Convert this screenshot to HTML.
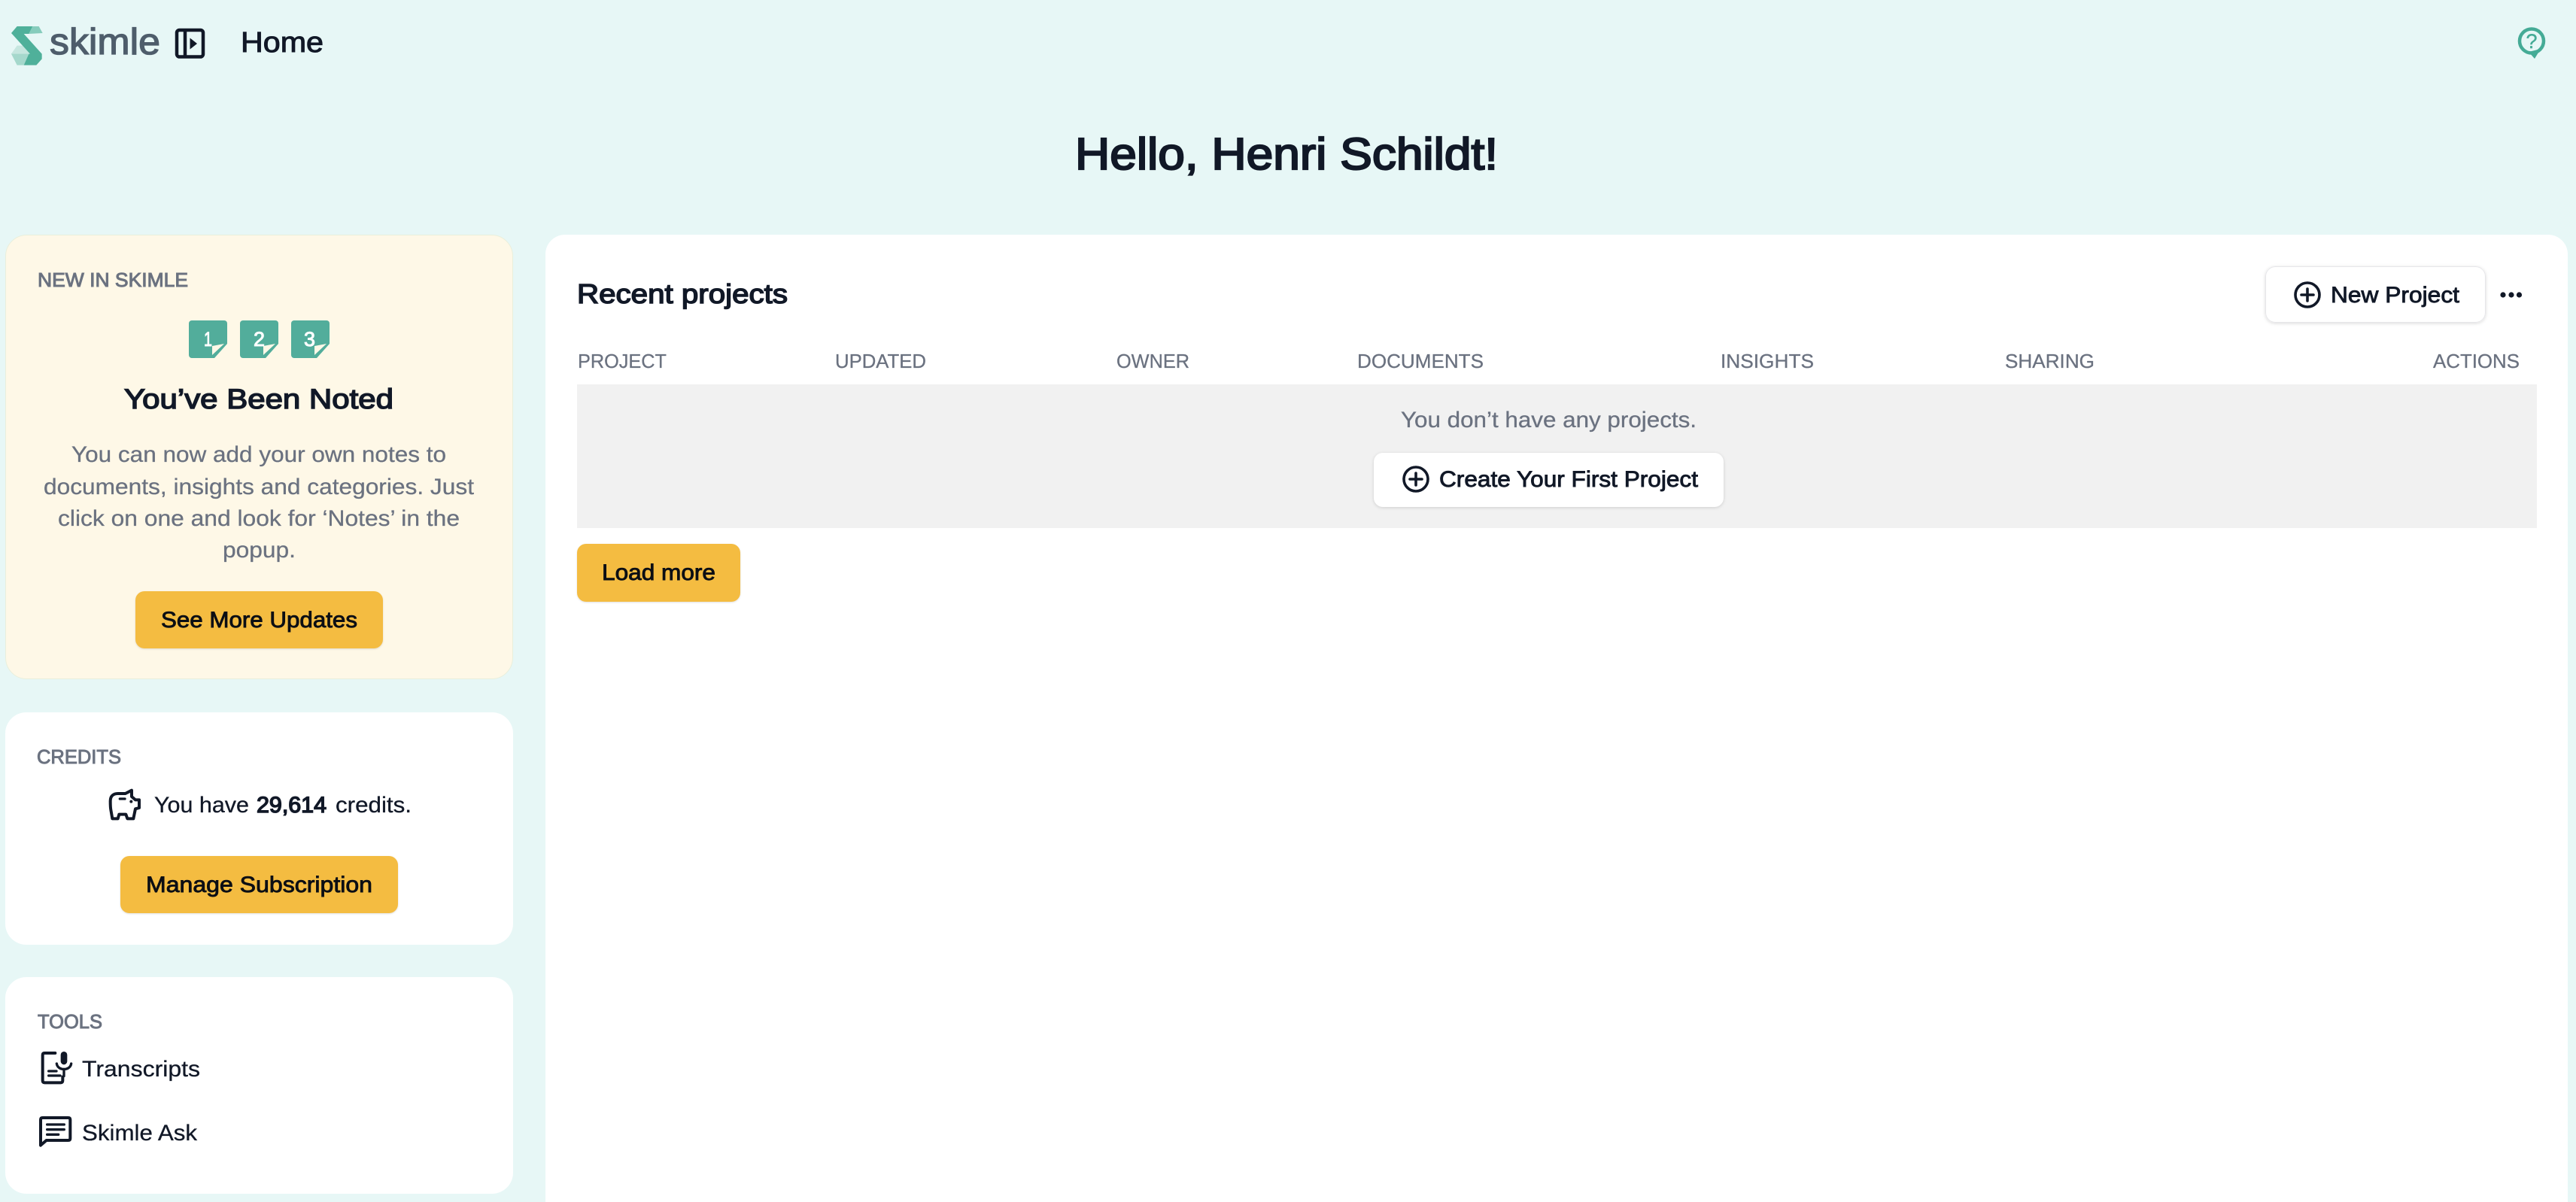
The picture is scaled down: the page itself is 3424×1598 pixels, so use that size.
<!DOCTYPE html>
<html lang="en">
<head>
<meta charset="utf-8">
<title>Skimle - Home</title>
<style>
html,body{margin:0;padding:0;width:3424px;height:1598px;overflow:hidden;background:#e7f7f6}
svg{display:block}
text{font-family:"Liberation Sans",sans-serif;white-space:pre}
.d{fill:#111827;stroke:#111827}
.g{fill:#6b7280;stroke:#6b7280}
.b{fill:#0c0f14;stroke:#0c0f14}
.m{stroke-width:.9}
.s{stroke-width:1.5}
.l{stroke-width:1}
.r{stroke-width:.3}
.btn{fill:#f4bc41;filter:drop-shadow(0 1px 1px rgba(0,0,0,.12))}
.wbtn{fill:#fff;filter:drop-shadow(0 1px 2px rgba(0,0,0,.14))}
.ico{fill:none;stroke:#111827;stroke-linecap:round;stroke-linejoin:round}
</style>
</head>
<body>
<svg xmlns="http://www.w3.org/2000/svg" width="3424" height="1598" viewBox="0 0 3424 1598">
<rect width="3424" height="1598" fill="#e7f7f6"/>

<!-- Logo -->
<g transform="translate(10,30) scale(.3333)">
  <polygon points="100,15 125,15 140,42 85,45" fill="#86ccbc"/>
  <polygon points="15,125 38,98 65,98 85,125 65,170 38,170" fill="#a5d8cc"/>
  <polygon points="15,125 38,92 75,92 97,125" fill="#c6e6df"/>
  <polygon points="15,42 38,15 100,15 85,45 65,45 137,125 137,145 115,170 65,170 85,125 90,125" fill="#4fb09a"/>
</g>
<text x="66" y="72" font-size="49" fill="#4e5d6b" stroke="#4e5d6b" stroke-width="1.300" textLength="147" lengthAdjust="spacingAndGlyphs">skimle</text>

<!-- Sidebar toggle -->
<rect x="235" y="40" width="35" height="35.500" rx="3.500" fill="none" stroke="#111827" stroke-width="4.500"/>
<line x1="246" y1="40" x2="246" y2="75" stroke="#111827" stroke-width="4.500"/>
<polygon points="252.500,50.500 262,58 252.500,65.500" fill="#111827"/>

<text class="d l" x="320" y="69" font-size="38" textLength="110" lengthAdjust="spacingAndGlyphs">Home</text>

<!-- Help -->
<circle cx="3365" cy="54.500" r="16" fill="none" stroke="#45ab96" stroke-width="4.500"/>
<polygon points="3361,69 3377,65 3369,78" fill="#45ab96"/>
<text x="3365" y="64" font-size="27" text-anchor="middle" fill="#45ab96" stroke="#45ab96" stroke-width=".4">?</text>

<!-- Title -->
<text class="d" stroke-width="2.200" x="1429" y="225" font-size="59" textLength="562" lengthAdjust="spacingAndGlyphs">Hello, Henri Schildt!</text>

<!-- New in Skimle -->
<rect x="7.500" y="312.500" width="674" height="590" rx="28" fill="#fef8e7" stroke="#e9efdc" stroke-width="1"/>
<text class="g l" x="50" y="381" font-size="25.500" textLength="200" lengthAdjust="spacingAndGlyphs">NEW IN SKIMLE</text>

<g>
  <path d="M255 426H298a4 4 0 0 1 4 4V457L285 476H255a4 4 0 0 1-4-4V430a4 4 0 0 1 4-4Z" fill="#52ad9b"/>
  <text x="271" y="460" font-size="27" fill="#fff" stroke="#fff" stroke-width="1" textLength="11" lengthAdjust="spacingAndGlyphs">1</text>
  <polygon points="298,457 282,460 282,472" fill="#fef8e7"/>
</g>
<g>
  <path d="M323 426H366a4 4 0 0 1 4 4V457L353 476H323a4 4 0 0 1-4-4V430a4 4 0 0 1 4-4Z" fill="#52ad9b"/>
  <text x="337" y="460" font-size="27" fill="#fff" stroke="#fff" stroke-width="1" textLength="15" lengthAdjust="spacingAndGlyphs">2</text>
  <polygon points="366,457 350,460 350,472" fill="#fef8e7"/>
</g>
<g>
  <path d="M391 426H434a4 4 0 0 1 4 4V457L421 476H391a4 4 0 0 1-4-4V430a4 4 0 0 1 4-4Z" fill="#52ad9b"/>
  <text x="404" y="460" font-size="27" fill="#fff" stroke="#fff" stroke-width="1" textLength="15" lengthAdjust="spacingAndGlyphs">3</text>
  <polygon points="434,457 418,460 418,472" fill="#fef8e7"/>
</g>

<text class="d s" x="165" y="543" font-size="37" textLength="358" lengthAdjust="spacingAndGlyphs">You’ve Been Noted</text>
<text class="g r" x="95" y="614" font-size="29.500" textLength="498" lengthAdjust="spacingAndGlyphs">You can now add your own notes to</text>
<text class="g r" x="58" y="657" font-size="29.500" textLength="572" lengthAdjust="spacingAndGlyphs">documents, insights and categories. Just</text>
<text class="g r" x="77" y="699" font-size="29.500" textLength="534" lengthAdjust="spacingAndGlyphs">click on one and look for ‘Notes’ in the</text>
<text class="g r" x="296" y="741" font-size="29.500" textLength="97" lengthAdjust="spacingAndGlyphs">popup.</text>

<rect class="btn" x="180" y="786" width="329" height="76" rx="12"/>
<text class="b m" x="214" y="834" font-size="30" textLength="261" lengthAdjust="spacingAndGlyphs">See More Updates</text>

<!-- Credits -->
<rect x="7" y="947" width="675" height="309" rx="28" fill="#fff"/>
<text class="g l" x="49" y="1015" font-size="25.500" textLength="112" lengthAdjust="spacingAndGlyphs">CREDITS</text>
<g transform="translate(130,1040) scale(.3333)">
  <path class="ico" stroke-width="12" d="M50 75C50 55 62 45 80 45H110L135 32V57L150 70H165V102L150 106L142 145H118L112 128H85L80 145H58L52 110C50 100 50 90 50 75Z"/>
  <line class="ico" stroke-width="10" x1="88" y1="66" x2="108" y2="66"/>
  <circle cx="133" cy="77" r="6" fill="#111827"/>
</g>
<text class="d r" x="205" y="1080" font-size="29.500" textLength="126" lengthAdjust="spacingAndGlyphs">You have</text>
<text class="d s" x="341" y="1080" font-size="29.500" textLength="93" lengthAdjust="spacingAndGlyphs">29,614</text>
<text class="d r" x="446" y="1080" font-size="29.500" textLength="101" lengthAdjust="spacingAndGlyphs">credits.</text>
<rect class="btn" x="160" y="1138" width="369" height="76" rx="12"/>
<text class="b m" x="194" y="1186" font-size="30" textLength="301" lengthAdjust="spacingAndGlyphs">Manage Subscription</text>

<!-- Tools -->
<rect x="7" y="1299" width="675" height="288" rx="28" fill="#fff"/>
<text class="g l" x="50" y="1367" font-size="25.500" textLength="86" lengthAdjust="spacingAndGlyphs">TOOLS</text>
<g transform="translate(40,1390) scale(.3333)">
  <path class="ico" stroke-width="12" d="M100 30H58Q50 30 50 38V140Q50 148 58 148H122Q130 148 130 140V125"/>
  <line class="ico" stroke-width="10" x1="74" y1="102" x2="105" y2="102"/>
  <line class="ico" stroke-width="10" x1="74" y1="120" x2="120" y2="120"/>
  <rect x="122" y="24" width="26" height="52" rx="13" fill="#111827"/>
  <path class="ico" stroke-width="10" d="M106 72C110 102 160 102 164 72M135 94V122"/>
</g>
<text class="d r" x="109" y="1431" font-size="29.500" textLength="157" lengthAdjust="spacingAndGlyphs">Transcripts</text>
<g transform="translate(40,1390) scale(.3333)">
  <path class="ico" stroke-width="12" d="M50 288H152Q160 288 160 296V370Q160 378 152 378H65L42 398V296Q42 288 50 288Z"/>
  <path class="ico" stroke-width="10" d="M68 315H136M68 335H136M68 355H113"/>
</g>
<text class="d r" x="109" y="1516" font-size="29.500" textLength="153" lengthAdjust="spacingAndGlyphs">Skimle Ask</text>

<!-- Main panel -->
<path d="M725 338a26 26 0 0 1 26-26H3387a26 26 0 0 1 26 26V1598H725Z" fill="#fff"/>
<text class="d s" x="767" y="403" font-size="36" textLength="280" lengthAdjust="spacingAndGlyphs">Recent projects</text>

<rect class="wbtn" x="3011" y="354" width="293" height="75" rx="13"/>
<rect x="3011.500" y="354.500" width="292" height="74" rx="13" fill="none" stroke="#e6e6e9" stroke-width="1"/>
<g class="ico" stroke-width="3.600">
  <circle cx="3067" cy="392" r="16"/>
  <path d="M3067 384V400M3059 392H3075"/>
</g>
<text class="d m" x="3098" y="402" font-size="30" textLength="171" lengthAdjust="spacingAndGlyphs">New Project</text>
<circle cx="3327" cy="392" r="3.600" fill="#111827"/>
<circle cx="3338" cy="392" r="3.600" fill="#111827"/>
<circle cx="3348.500" cy="392" r="3.600" fill="#111827"/>

<!-- Table header -->
<text class="g r" x="768" y="489" font-size="26" textLength="118" lengthAdjust="spacingAndGlyphs">PROJECT</text>
<text class="g r" x="1110" y="489" font-size="26" textLength="121" lengthAdjust="spacingAndGlyphs">UPDATED</text>
<text class="g r" x="1484" y="489" font-size="26" textLength="97" lengthAdjust="spacingAndGlyphs">OWNER</text>
<text class="g r" x="1804" y="489" font-size="26" textLength="168" lengthAdjust="spacingAndGlyphs">DOCUMENTS</text>
<text class="g r" x="2287" y="489" font-size="26" textLength="124" lengthAdjust="spacingAndGlyphs">INSIGHTS</text>
<text class="g r" x="2665" y="489" font-size="26" textLength="119" lengthAdjust="spacingAndGlyphs">SHARING</text>
<text class="g r" x="3234" y="489" font-size="26" textLength="115" lengthAdjust="spacingAndGlyphs">ACTIONS</text>

<!-- Empty state -->
<rect x="767" y="511" width="2605" height="191" fill="#f1f1f1"/>
<text class="g r" x="1862" y="568" font-size="30" textLength="393" lengthAdjust="spacingAndGlyphs">You don’t have any projects.</text>
<rect class="wbtn" x="1826" y="602" width="465" height="72" rx="12"/>
<g class="ico" stroke-width="3.600">
  <circle cx="1882" cy="637" r="16"/>
  <path d="M1882 629V645M1874 637H1890"/>
</g>
<text class="d m" x="1913" y="647" font-size="30" textLength="344" lengthAdjust="spacingAndGlyphs">Create Your First Project</text>

<rect class="btn" x="767" y="723" width="217" height="77" rx="12"/>
<text class="b m" x="800" y="771" font-size="30" textLength="151" lengthAdjust="spacingAndGlyphs">Load more</text>
</svg>
</body>
</html>
